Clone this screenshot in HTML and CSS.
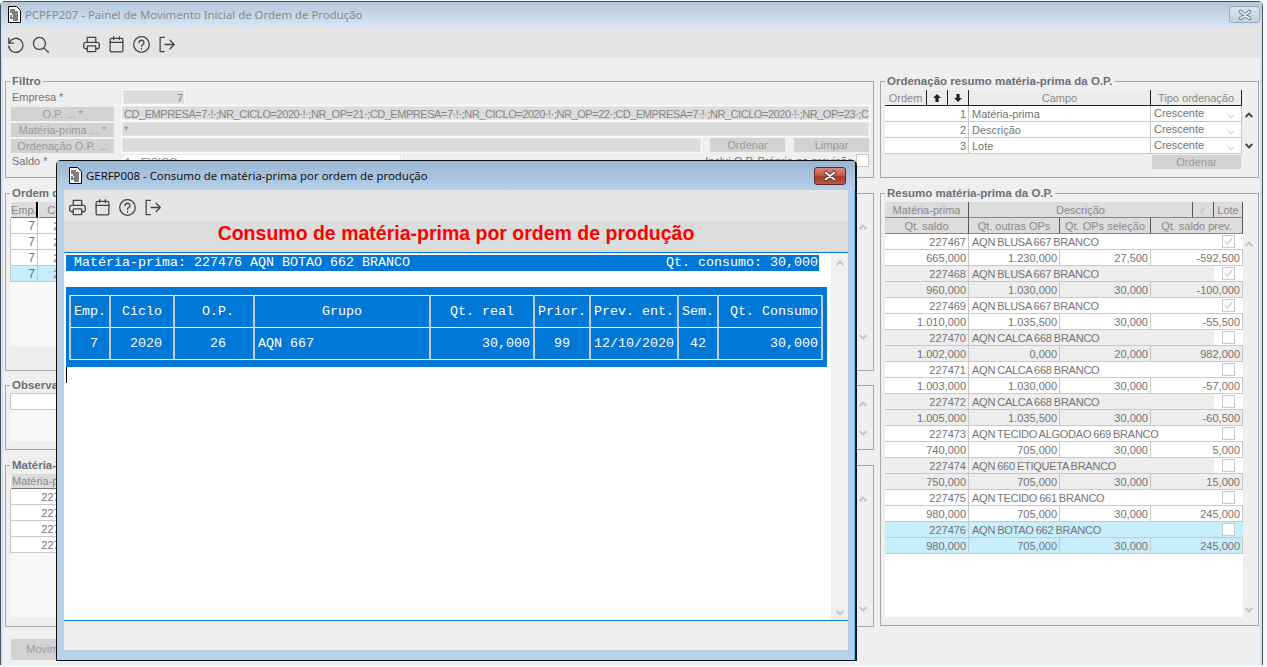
FILE: index.html
```html
<!DOCTYPE html>
<html lang="pt-BR">
<head>
<meta charset="utf-8">
<title>PCPFP207</title>
<link rel="stylesheet" href="styles.css">
</head>
<body>
<svg class="defs" width="0" height="0" aria-hidden="true">
  <symbol id="i-doc" viewBox="0 0 14 17"><path d="M1.5.5h8l4 4v12h-12z" fill="#fff" stroke="#000"/><path d="M3 4h5M3 6h8M5 8h6M3 10h2M6 10h5M3 12h8M6 14h5" stroke="#000" stroke-width="1.2" fill="none"/></symbol>
  <symbol id="i-undo" viewBox="0 0 24 24"><path d="M2.500 3v7h7"/><path d="M3 10a10 10 0 1 1-.5 4"/></symbol>
  <symbol id="i-search" viewBox="0 0 24 24"><circle cx="10.500" cy="10.500" r="8.500"/><path d="M16.700 16.700 23 23"/></symbol>
  <symbol id="i-print" viewBox="0 0 24 24"><path d="M6 9V2h12v7"/><path d="M6 18H4a3 3 0 0 1-3-3v-3a3 3 0 0 1 3-3h16a3 3 0 0 1 3 3v3a3 3 0 0 1-3 3h-2"/><rect x="6" y="14" width="12" height="8" rx="1"/></symbol>
  <symbol id="i-cal" viewBox="0 0 24 24"><rect x="3" y="3.500" width="18" height="19" rx="2"/><path d="M3 9h18M8 1v4M16 1v4"/></symbol>
  <symbol id="i-help" viewBox="0 0 24 24"><circle cx="12" cy="12" r="11"/><path d="M8.500 9.500a3.500 3.500 0 0 1 7 0c0 2.500-3.500 2.500-3.500 5"/><path d="M12 17.500v1"/></symbol>
  <symbol id="i-exit" viewBox="0 0 24 24"><path d="M9 2H3v20h6"/><path d="M10 12h13M17 6l6 6-6 6"/></symbol>
  <symbol id="i-up" viewBox="0 0 12 8"><path d="M1 7l5-5 5 5"/></symbol>
  <symbol id="i-down" viewBox="0 0 12 8"><path d="M1 1l5 5 5-5"/></symbol>
  <symbol id="i-check" viewBox="0 0 13 13"><path d="M2 6.500l3 3 6-7"/></symbol>
  <symbol id="i-aup" viewBox="0 0 10 10"><path d="M5 0l5 5H7v5H3V5H0z"/></symbol>
  <symbol id="i-adown" viewBox="0 0 10 10"><path d="M5 10L0 5h3V0h4v5h3z"/></symbol>
  <symbol id="i-x" viewBox="0 0 16 12"><path class="x-o" d="M3.500 2.500l9 7M12.500 2.500l-9 7"/><path class="x-i" d="M3.500 2.500l9 7M12.500 2.500l-9 7"/></symbol>
</svg>

<section class="win main-win">
  <header class="titlebar">
    <svg class="doc"><use href="#i-doc"/></svg>
    <span class="title title-off">PCPFP207 - Painel de Movimento Inicial de Ordem de Produção</span>
    <span class="close close-off"><svg><use href="#i-x"/></svg></span>
  </header>
  <nav class="toolbar">
    <svg class="ico"><use href="#i-undo"/></svg>
    <svg class="ico"><use href="#i-search"/></svg>
    <svg class="ico ico-gap"><use href="#i-print"/></svg>
    <svg class="ico"><use href="#i-cal"/></svg>
    <svg class="ico"><use href="#i-help"/></svg>
    <svg class="ico"><use href="#i-exit"/></svg>
  </nav>
  <div class="panel">
    <div class="col">
      <fieldset class="fs fs-filtro">
        <legend>Filtro</legend>
        <div class="row"><label class="lbl">Empresa *</label><div class="inp inp-emp">7</div></div>
        <div class="row"><button class="btn btn-f">O.P. ... *</button><div class="inp inp-grow inp-long">CD_EMPRESA=7·!·;NR_CICLO=2020·!·;NR_OP=21·;CD_EMPRESA=7·!·;NR_CICLO=2020·!·;NR_OP=22·;CD_EMPRESA=7·!·;NR_CICLO=2020·!·;NR_OP=23·;CD_EMPRESA=7</div></div>
        <div class="row"><button class="btn btn-f">Matéria-prima ... *</button><div class="inp inp-grow">*</div></div>
        <div class="row"><button class="btn btn-f">Ordenação O.P. ...</button><div class="inp inp-ord"></div><button class="btn btn-s">Ordenar</button><button class="btn btn-s btn-s2">Limpar</button></div>
        <div class="row"><label class="lbl">Saldo *</label><div class="inp inp-saldo">1 - FISICO</div><span class="inclui">Inclui O.P. Própria na previsão</span><span class="chk"></span></div>
      </fieldset>

      <fieldset class="fs fs-ordem">
        <legend>Ordem da O.P.</legend>
        <div class="pane">
          <div class="pane-main">
            <div class="hdr"><span class="h h-emp">Emp.</span><span class="h h-cic">Ciclo</span><span class="h h-rest"></span></div>
            <div class="orow"><span class="c c-emp">7</span><span class="c c-cic">2020</span></div>
            <div class="orow"><span class="c c-emp">7</span><span class="c c-cic">2020</span></div>
            <div class="orow"><span class="c c-emp">7</span><span class="c c-cic">2020</span></div>
            <div class="orow sel"><span class="c c-emp">7</span><span class="c c-cic">2020</span></div>
          </div>
          <div class="sb"><svg class="chev"><use href="#i-up"/></svg><svg class="chev"><use href="#i-down"/></svg></div>
        </div>
      </fieldset>

      <fieldset class="fs fs-obs">
        <legend>Observações</legend>
        <div class="pane">
          <div class="pane-main"><div class="obs-inp"></div></div>
          <div class="sb"><svg class="chev"><use href="#i-up"/></svg><svg class="chev"><use href="#i-down"/></svg></div>
        </div>
      </fieldset>

      <fieldset class="fs fs-mat">
        <legend>Matéria-prima</legend>
        <div class="pane">
          <div class="pane-main">
            <div class="hdr hdr-mat"><span class="h h-mat">Matéria-prima</span></div>
            <div class="orow"><span class="c c-mat">227476</span></div>
            <div class="orow"><span class="c c-mat">227476</span></div>
            <div class="orow"><span class="c c-mat">227476</span></div>
            <div class="orow"><span class="c c-mat">227476</span></div>
          </div>
          <div class="sb"><svg class="chev"><use href="#i-up"/></svg><svg class="chev"><use href="#i-down"/></svg></div>
        </div>
      </fieldset>

      <button class="btn btn-mov">Movimentar</button>
    </div>

    <div class="col">
      <fieldset class="fs fs-filtro fs-rord">
        <legend>Ordenação resumo matéria-prima da O.P.</legend>
        <div class="pane">
          <div class="pane-main">
            <div class="ord-grid ord-head">
              <span class="h h-light">Ordem</span>
              <span class="h h-light h-arrow"><svg><use href="#i-aup"/></svg></span>
              <span class="h h-light h-arrow"><svg><use href="#i-adown"/></svg></span>
              <span class="h h-light">Campo</span>
              <span class="h h-light">Tipo ordenação</span>
            </div>
            <div class="ord-grid ord-row"><span class="c c-r">1</span><span class="c">Matéria-prima</span><span class="c c-tipo">Crescente<svg class="chev-sel"><use href="#i-down"/></svg></span></div>
            <div class="ord-grid ord-row"><span class="c c-r">2</span><span class="c">Descrição</span><span class="c c-tipo">Crescente<svg class="chev-sel"><use href="#i-down"/></svg></span></div>
            <div class="ord-grid ord-row"><span class="c c-r">3</span><span class="c">Lote</span><span class="c c-tipo">Crescente<svg class="chev-sel"><use href="#i-down"/></svg></span></div>
            <div class="ord-foot"><button class="btn btn-o">Ordenar</button></div>
          </div>
          <div class="sb sb-rord"><svg class="chev chev-dark"><use href="#i-up"/></svg><svg class="chev chev-dark"><use href="#i-down"/></svg></div>
        </div>
      </fieldset>

      <fieldset class="fs fs-resumo">
        <legend>Resumo matéria-prima da O.P.</legend>
        <div class="pane pane-res">
          <div class="pane-main res-main">
            <div class="rh1"><span class="h h-r">Matéria-prima</span><span class="h h-r">Descrição</span><span class="h h-r h-ic">⁄⁄</span><span class="h h-r">Lote</span></div>
            <div class="rh2"><span class="h h-r">Qt. saldo</span><span class="h h-r">Qt. outras OPs</span><span class="h h-r">Qt. OPs seleção</span><span class="h h-r">Qt. saldo prev.</span></div>

            <div class="ra"><span class="c c-r">227467</span><span class="c d">AQN BLUSA 667 BRANCO</span><span class="cbx"><span class="chk"><svg><use href="#i-check"/></svg></span></span></div>
            <div class="rb"><span class="c c-r">665,000</span><span class="c c-r">1.230,000</span><span class="c c-r">27,500</span><span class="c c-r">-592,500</span></div>
            <div class="ra alt"><span class="c c-r">227468</span><span class="c d">AQN BLUSA 667 BRANCO</span><span class="cbx"><span class="chk"><svg><use href="#i-check"/></svg></span></span></div>
            <div class="rb alt"><span class="c c-r">960,000</span><span class="c c-r">1.030,000</span><span class="c c-r">30,000</span><span class="c c-r">-100,000</span></div>
            <div class="ra"><span class="c c-r">227469</span><span class="c d">AQN BLUSA 667 BRANCO</span><span class="cbx"><span class="chk"><svg><use href="#i-check"/></svg></span></span></div>
            <div class="rb"><span class="c c-r">1.010,000</span><span class="c c-r">1.035,500</span><span class="c c-r">30,000</span><span class="c c-r">-55,500</span></div>
            <div class="ra alt"><span class="c c-r">227470</span><span class="c d">AQN CALCA 668 BRANCO</span><span class="cbx"><span class="chk"></span></span></div>
            <div class="rb alt"><span class="c c-r">1.002,000</span><span class="c c-r">0,000</span><span class="c c-r">20,000</span><span class="c c-r">982,000</span></div>
            <div class="ra"><span class="c c-r">227471</span><span class="c d">AQN CALCA 668 BRANCO</span><span class="cbx"><span class="chk"></span></span></div>
            <div class="rb"><span class="c c-r">1.003,000</span><span class="c c-r">1.030,000</span><span class="c c-r">30,000</span><span class="c c-r">-57,000</span></div>
            <div class="ra alt"><span class="c c-r">227472</span><span class="c d">AQN CALCA 668 BRANCO</span><span class="cbx"><span class="chk"></span></span></div>
            <div class="rb alt"><span class="c c-r">1.005,000</span><span class="c c-r">1.035,500</span><span class="c c-r">30,000</span><span class="c c-r">-60,500</span></div>
            <div class="ra"><span class="c c-r">227473</span><span class="c d">AQN TECIDO ALGODAO 669 BRANCO</span><span class="cbx"><span class="chk"></span></span></div>
            <div class="rb"><span class="c c-r">740,000</span><span class="c c-r">705,000</span><span class="c c-r">30,000</span><span class="c c-r">5,000</span></div>
            <div class="ra alt"><span class="c c-r">227474</span><span class="c d">AQN 660 ETIQUETA BRANCO</span><span class="cbx"><span class="chk"></span></span></div>
            <div class="rb alt"><span class="c c-r">750,000</span><span class="c c-r">705,000</span><span class="c c-r">30,000</span><span class="c c-r">15,000</span></div>
            <div class="ra"><span class="c c-r">227475</span><span class="c d">AQN TECIDO 661 BRANCO</span><span class="cbx"><span class="chk"></span></span></div>
            <div class="rb"><span class="c c-r">980,000</span><span class="c c-r">705,000</span><span class="c c-r">30,000</span><span class="c c-r">245,000</span></div>
            <div class="ra sel"><span class="c c-r">227476</span><span class="c d">AQN BOTAO 662 BRANCO</span><span class="cbx"><span class="chk"></span></span></div>
            <div class="rb sel"><span class="c c-r">980,000</span><span class="c c-r">705,000</span><span class="c c-r">30,000</span><span class="c c-r">245,000</span></div>
          </div>
          <div class="sb sb-res"><svg class="chev"><use href="#i-up"/></svg><svg class="chev"><use href="#i-down"/></svg></div>
        </div>
      </fieldset>
    </div>
  </div>
</section>

<section class="win modal">
  <header class="titlebar m-title">
    <svg class="doc"><use href="#i-doc"/></svg>
    <span class="title">GERFP008 - Consumo de matéria-prima por ordem de produção</span>
    <span class="close close-red"><svg><use href="#i-x"/></svg></span>
  </header>
  <div class="m-inner">
    <nav class="toolbar m-tools">
      <svg class="ico"><use href="#i-print"/></svg>
      <svg class="ico"><use href="#i-cal"/></svg>
      <svg class="ico"><use href="#i-help"/></svg>
      <svg class="ico"><use href="#i-exit"/></svg>
    </nav>
    <h1 class="m-head">Consumo de matéria-prima por ordem de produção</h1>
    <div class="m-body">
      <div class="consumo">
        <div class="bar"><span>Matéria-prima: 227476 AQN BOTAO 662 BRANCO</span><span>Qt. consumo: 30,000</span></div>
        <div class="blue">
          <table class="tbl">
            <colgroup>
              <col class="k1"><col class="k2"><col class="k3"><col class="k4"><col class="k5"><col class="k6"><col class="k7"><col class="k8"><col class="k9">
            </colgroup>
            <tr><th>Emp.</th><th>Ciclo</th><th class="sh">O.P.</th><th>Grupo</th><th>Qt. real</th><th>Prior.</th><th>Prev. ent.</th><th>Sem.</th><th class="r">Qt. Consumo</th></tr>
            <tr><td class="sh">7</td><td class="sh">2020</td><td class="sh">26</td><td class="l">AQN 667</td><td class="r">30,000</td><td>99</td><td>12/10/2020</td><td>42</td><td class="r">30,000</td></tr>
          </table>
        </div>
        <div class="caret"></div>
      </div>
      <div class="sb sb-modal"><svg class="chev"><use href="#i-up"/></svg><svg class="chev"><use href="#i-down"/></svg></div>
    </div>
    <div class="m-foot"></div>
  </div>
</section>
</body>
</html>
```
FILE: styles.css
```css
* { box-sizing: border-box; }
html, body { margin: 0; height: 100%; overflow: hidden; }
body { background: #f3fafd; font: 11px/16px "Liberation Sans", Arial, sans-serif; color: #747474; }
.defs { position: absolute; }

.win { position: absolute; display: flex; flex-direction: column; }
.main-win { left: 0; top: 1px; width: 1263px; height: 664px; border: 1px solid #4a5058; border-bottom: 0; background: #d6e4f0; border-radius: 5px 5px 0 0; }
.titlebar { height: 25px; flex: none; display: flex; align-items: center; padding: 0 2px 0 6px; background: linear-gradient(#b4c6d8, #d8e6f2); }
.doc { width: 14px; height: 17px; flex: none; margin-right: 4px; }
.title { flex: 1; font: 11.4px/16px "Noto Sans", sans-serif; color: #111; white-space: nowrap; }
.title-off { color: #848c94; }
.close { width: 31px; height: 17px; flex: none; border-radius: 3px; display: flex; align-items: center; justify-content: center; }
.close svg { width: 16px; height: 12px; fill: none; stroke-linecap: round; }
.x-o { stroke-width: 3.6; stroke: var(--x-out); }
.x-i { stroke-width: 1.6; stroke: var(--x-in); }
.close-off { --x-out: #808080; --x-in: #eee; border: 1px solid #9aa8b6; background: linear-gradient(#d8e4ee, #c2d2e0); }
.close-red { --x-out: #5a3a3a; --x-in: #fff; width: 32px; height: 18px; border: 1px solid #5a2a2a; background: linear-gradient(#d88a78 0, #c85a46 45%, #a83a24 55%, #c05a40 100%); margin-right: 9px; }

.toolbar { height: 31px; flex: none; display: flex; align-items: center; gap: 8px; padding: 3px 0 0 4px; margin: 0 2px; background: #e5e5e5; }
.ico { width: 17px; height: 17px; flex: none; fill: none; stroke: #444; stroke-width: 1.8; stroke-linecap: round; stroke-linejoin: round; }
.ico-gap { margin-left: 26px; }

.panel { flex: 1; margin: 0 2px; background: #efefef; padding: 17px 0 0 2px; display: grid; grid-template-columns: 869px 379px; column-gap: 6px; align-items: start; }
.col { display: flex; flex-direction: column; }

.fs { margin: 0; padding: 0 4px; min-width: 0; border: 1px solid #a8a8a8; }
.fs legend { padding: 0 2px; font-weight: bold; font-size: 11.5px; line-height: 13px; height: 13px; color: #6c7078; white-space: nowrap; }
.fs-filtro { height: 103px; padding-top: 1px; }
.fs-ordem { height: 184px; margin-top: 9px; padding-top: 2px; }
.fs-obs { height: 71px; margin-top: 8px; padding-top: 1px; }
.fs-mat { height: 168px; margin-top: 9px; padding-top: 2px; }
.fs-resumo { height: 439px; margin-top: 9px; padding-top: 2px; }
.fs-rord { padding-top: 2px; }

.row { display: flex; height: 16px; white-space: nowrap; }
.lbl { width: 112px; flex: none; padding-left: 2px; }
.btn { padding: 0; border: 0; background: #d2d2d2; color: #9a9a9a; font: 11px/14px "Liberation Sans", Arial, sans-serif; text-align: center; flex: none; }
.btn-f { width: 103px; height: 14px; margin: 2px 7px 0 1px; }
.inp { height: 16px; flex: none; border: 1px solid #fafafa; background: #dcdcdc; padding: 0 2px; overflow: hidden; color: #868686; box-shadow: inset 0 0 0 1px #e6e6e6; }
.inp-emp { width: 63px; text-align: right; padding-right: 1px; }
.inp-grow { width: 749px; }
.inp-long { letter-spacing: -.45px; }
.inp-ord { width: 581px; }
.inp-saldo { width: 280px; background: #fff; }
.btn-s { width: 75px; height: 14px; margin: 1px 0 0 8px; }
.btn-s2 { margin-left: 9px; }
.inclui { flex: 1; min-width: 0; text-align: right; padding-right: 3px; }
.row .chk { margin: 1px 0 0 0; }
.chk { width: 13px; height: 13px; border: 1px solid #c8c8c8; background: #fff; display: block; flex: none; }
.chk svg { display: block; width: 11px; height: 11px; fill: none; stroke: #bdbdbd; stroke-width: 1.2; }

.pane { display: flex; }
.pane-main { flex: 1; min-width: 0; background: #f8f8f8; }
.sb { width: 12px; flex: none; display: flex; flex-direction: column; justify-content: space-between; align-items: center; }
.chev { width: 8px; height: 6px; flex: none; fill: none; stroke: #c4c4c4; stroke-width: 3; display: block; }
.chev-dark { stroke: #444; }

.fs-ordem .pane { height: 144px; }
.fs-ordem .sb { padding: 22px 0 6px; }
.fs-obs .pane { height: 48px; }
.fs-obs .sb { padding: 8px 0 5px; }
.fs-mat .pane { height: 143px; }
.fs-mat .sb { padding: 22px 0 5px; }

.hdr { display: flex; height: 16px; border-right: 2px solid #000; }
.hdr-mat { height: 15px; }
.h { display: block; background: #dcdcdc; color: #8a8a8a; text-align: center; line-height: 17px; border-right: 1px solid #555; border-bottom: 1px solid #777; white-space: nowrap; overflow: hidden; }
.h-emp { width: 27px; margin-left: 1px; border-right: 2px solid #000; line-height: 16px; }
.h-cic { width: 41px; margin-left: 1px; border-right: 0; line-height: 16px; }
.h-rest { flex: 1; border-right: 0; }
.h-mat { flex: 1; text-align: left; padding-left: 1px; border-right: 0; line-height: 15px; margin-left: 1px; }
.orow { display: flex; height: 16px; background: #fff; border-bottom: 1px solid #c8c8c8; border-left: 1px solid #c8c8c8; }
.orow .c { padding: 0 2px 0 0; }
.orow .c-emp { width: 27px; text-align: right; border-right: 1px solid #c8c8c8; font-size: 12px; }
.orow .c-cic { width: 42px; text-align: right; }
.orow .c-mat { width: 69px; text-align: right; }
.obs-inp { height: 17px; background: #fff; border: 1px solid #c8c8c8; }
.btn-mov { width: 88px; height: 21px; margin: 12px 0 0 6px; align-self: flex-start; line-height: 21px; }

.orow.sel, .orow.sel .c { background: #c8edfb; }

.ord-grid { display: grid; }
.ord-head { grid-template-columns: 42px 21px 21px 182px 91px; height: 16px; width: 357px; }
.ord-row { grid-template-columns: 84px 182px 91px; height: 16px; width: 357px; background: #fff; border-bottom: 1px solid #c8c8c8; }
.h-light { background: #ececec; border-right: 1px solid #222; border-bottom: 1px solid #222; }
.h-arrow { display: flex; align-items: center; justify-content: center; }
.h-arrow svg { width: 8px; height: 8px; fill: #222; }
.c { display: block; white-space: nowrap; overflow: hidden; padding: 0 2px 0 3px; line-height: 17px; }
.c-r { text-align: right; }
.d { letter-spacing: -.25px; word-spacing: -.7px; }
.ord-row .c { border-right: 1px solid #c8c8c8; }
.ord-row .c-tipo { position: relative; line-height: 15px; }
.chev-sel { position: absolute; right: 6px; top: 8px; width: 8px; height: 5px; fill: none; stroke-width: 1.2; stroke: #aaa; }
.ord-foot { display: flex; padding: 1px 0 0 267px; height: 16px; background: #efefef; width: 357px; }
.btn-o { width: 89px; height: 14px; }
.fs-rord .pane-main { background: #efefef; flex: none; width: 358px; }
.sb-rord { padding: 22px 0 5px; width: 11px; height: 64px; }

.pane-res { height: 415px; }
.res-main { background: #fff; flex: none; width: 358px; }
.rh1, .rh2, .rb { display: grid; grid-template-columns: 84px 91px 91px 92px; width: 358px; height: 16px; }
.rh1 { grid-template-columns: 84px 224px 21px 29px; }
.h-r { background: #dcdcdc; border-right: 1px solid #555; border-bottom: 1px solid #888; }
.h-ic { color: #bbb; font-size: 9px; }
.ra { display: grid; grid-template-columns: 84px 245px 29px; height: 16px; width: 358px; border-bottom: 1px solid #c8c8c8; }
.rb { border-bottom: 1px solid #c8c8c8; }
.rb .c { border-right: 1px solid #c8c8c8; }
.ra .c:first-child { border-right: 1px solid #c8c8c8; }
.ra .c, .rb .c { height: 15px; }
.ra.alt .c, .rb.alt .c { background: #eee; }
.ra.sel .c, .rb.sel .c, .ra.sel .cbx { background: #c8edfb; }
.cbx { display: flex; padding: 1px 0 0 8px; background: #fff; }
.sb-res { padding: 39px 0 4px; width: 11px; }

.modal { left: 56px; top: 160px; width: 801px; height: 501px; border: 1px solid #111; border-right: 2px solid #0b1a20; border-radius: 5px 5px 0 0; background: #b8d0e8; box-shadow: inset -1px 0 0 #4cc4ee; }
.m-title { height: 29px; padding: 0 0 0 11px; background: linear-gradient(#9ab6d4, #b8d0e8); }
.m-inner { margin: 0 7px 10px; flex: 1; display: flex; flex-direction: column; min-height: 0; }
.m-tools { margin: 0; padding-left: 5px; }
.m-head { margin: 0; height: 31px; flex: none; background: #dcdcdc; color: #f00; font: bold 19.5px/25px "Liberation Sans", Arial, sans-serif; text-align: center; }
.m-body { flex: 1; min-height: 0; display: flex; background: #fff; border-top: 1px solid #0078d7; border-bottom: 1px solid #0078d7; }
.consumo { flex: 1; padding: 2px 0 0 2px; }
.bar { width: 753px; height: 16px; background: #0078d7; color: #fff; display: flex; justify-content: space-between; padding: 0 1px 0 8px; font: 13.33px/16px "Liberation Mono", "Courier New", monospace; white-space: pre; margin-bottom: 16px; }
.blue { width: 761px; height: 80px; background: #0078d7; padding: 8px 3px; }
.tbl { width: 752px; table-layout: fixed; border-collapse: collapse; color: #fff; font: 13.33px/16px "Liberation Mono", "Courier New", monospace; }
.k1 { width: 40px; } .k2 { width: 64px; } .k3 { width: 80px; } .k4 { width: 176px; } .k5 { width: 104px; } .k6 { width: 56px; } .k7 { width: 88px; } .k8 { width: 40px; } .k9 { width: 104px; }
.tbl th, .tbl td { height: 32px; padding: 0; font-weight: normal; text-align: center; white-space: pre; border-top: 1px solid #fff; border-bottom: 1px solid #fff; border-left: 2px solid #c4cad6; border-right: 2px solid #c4cad6; overflow: hidden; }
.tbl .r { text-align: right; padding-right: 3px; }
.tbl .l { text-align: left; padding-left: 3px; }
.tbl .sh { padding-left: 8px; }
.caret { width: 1px; height: 16px; background: #000; }
.sb-modal { width: 17px; background: #f0f0f0; padding: 7px 0 4px; }
.m-foot { height: 29px; flex: none; background: #eee; }
```
